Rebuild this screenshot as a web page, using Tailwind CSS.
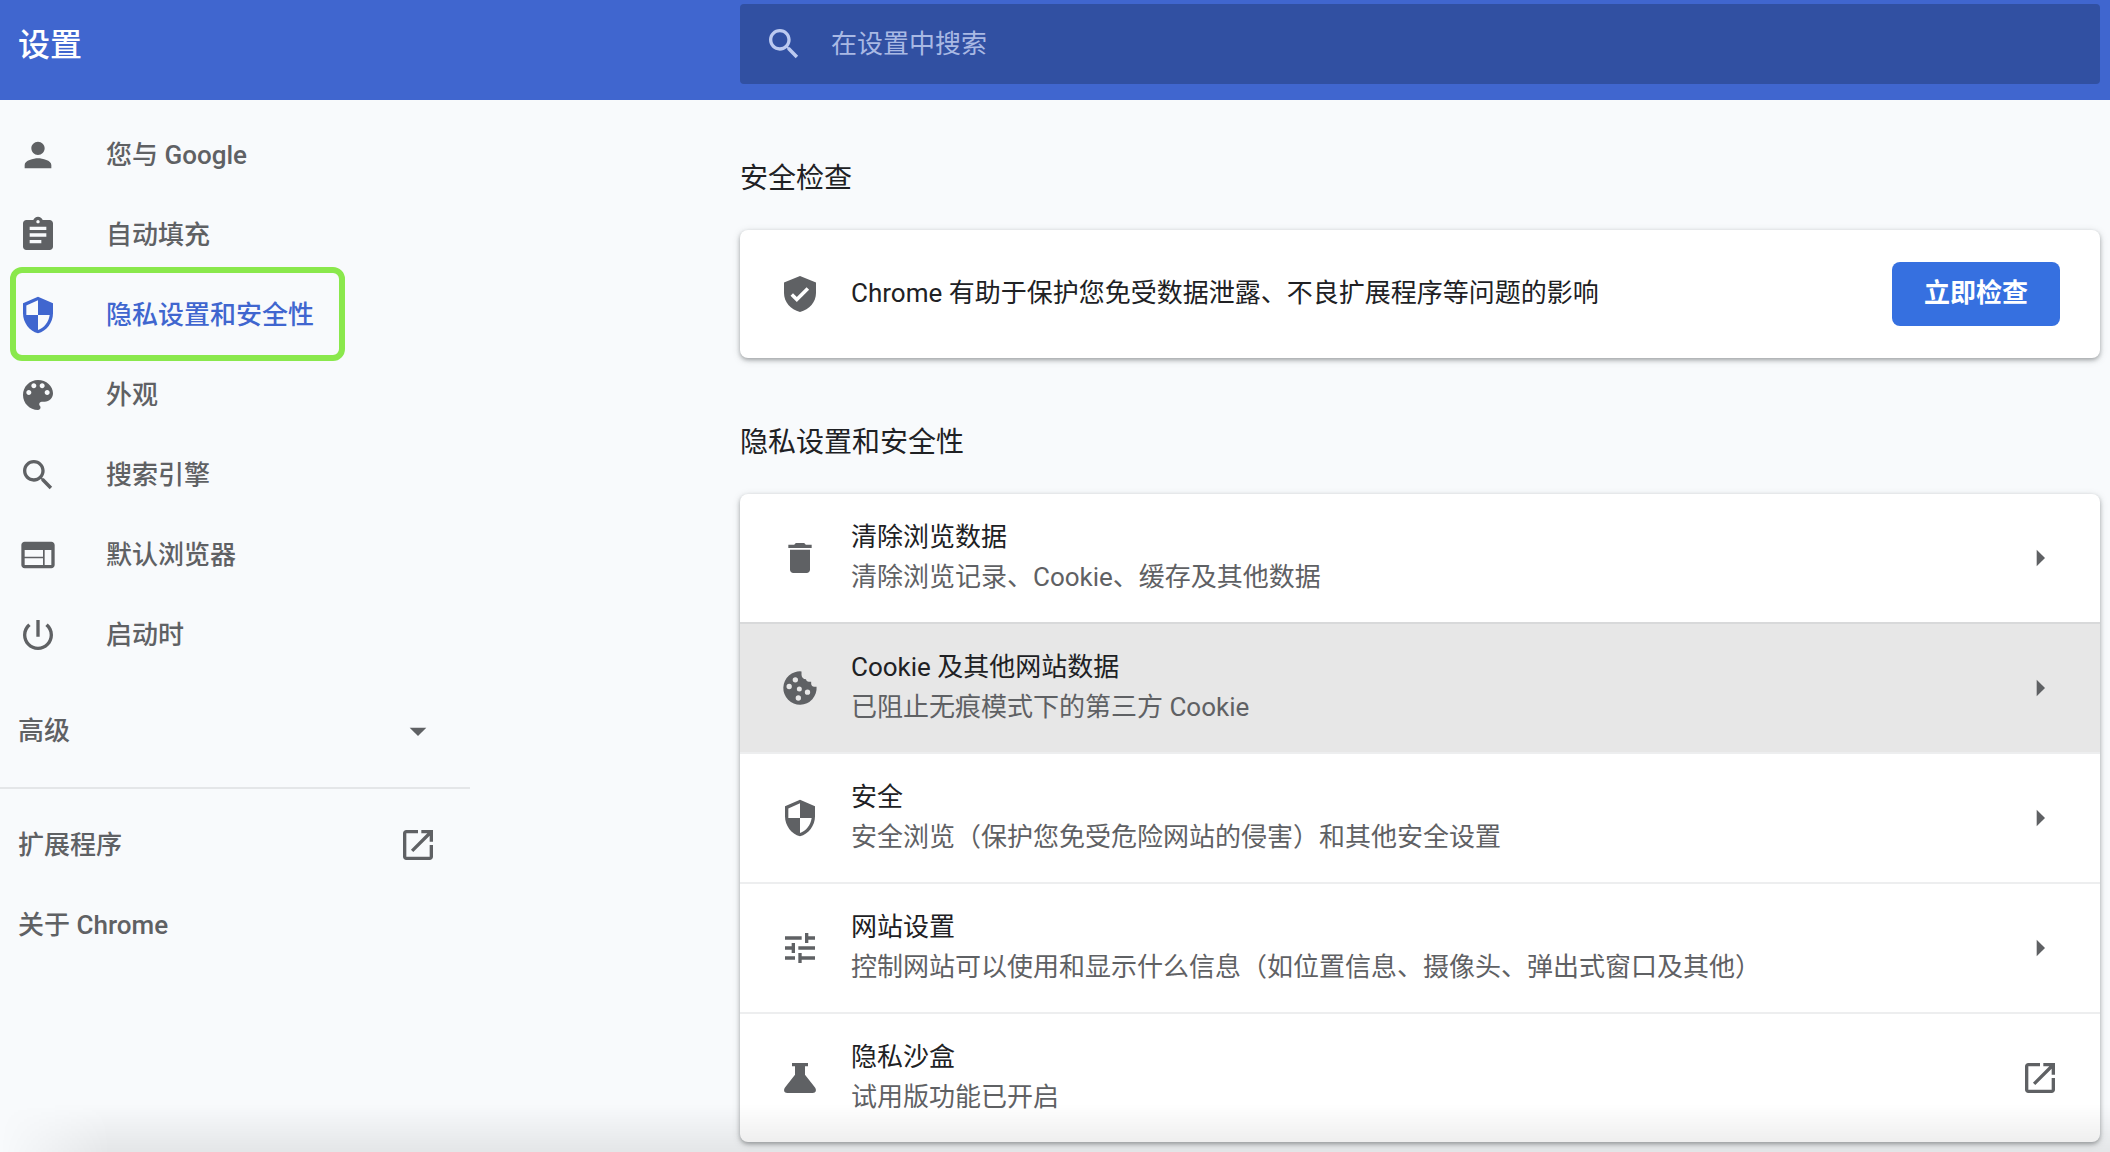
<!DOCTYPE html>
<html lang="zh-CN">
<head>
<meta charset="utf-8">
<title>设置</title>
<script src="https://cdn.jsdelivr.net/npm/@tailwindcss/browser@4"></script>
</head>
<body class="relative min-h-screen bg-[#f8fafc] font-[Roboto,'Noto_Sans_CJK_SC',sans-serif] text-[26px] leading-10 text-[#202124]">
<svg class="hidden" aria-hidden="true">
  <symbol id="search" viewBox="0 0 24 24"><path d="M15.5 14h-.79l-.28-.27C15.41 12.59 16 11.11 16 9.5 16 5.91 13.09 3 9.5 3S3 5.91 3 9.5 5.91 16 9.5 16c1.61 0 3.09-.59 4.23-1.57l.27.28v.79l5 4.99L20.49 19l-4.99-5zm-6 0C7.01 14 5 11.99 5 9.5S7.01 5 9.5 5 14 7.01 14 9.5 11.99 14 9.5 14z"/></symbol>
  <symbol id="person" viewBox="0 0 24 24"><path d="M12 12c2.21 0 4-1.79 4-4s-1.79-4-4-4-4 1.79-4 4 1.79 4 4 4zm0 2c-2.67 0-8 1.34-8 4v2h16v-2c0-2.66-5.33-4-8-4z"/></symbol>
  <symbol id="assignment" viewBox="0 0 24 24"><path d="M19 3h-4.18C14.4 1.84 13.3 1 12 1c-1.3 0-2.4.84-2.82 2H5c-1.1 0-2 .9-2 2v14c0 1.1.9 2 2 2h14c1.1 0 2-.9 2-2V5c0-1.1-.9-2-2-2zm-7 0c.55 0 1 .45 1 1s-.45 1-1 1-1-.45-1-1 .45-1 1-1zm2 14H7v-2h7v2zm3-4H7v-2h10v2zm0-4H7V7h10v2z"/></symbol>
  <symbol id="shield" viewBox="0 0 24 24"><path d="M12 1L3 5v6c0 5.55 3.84 10.74 9 12 5.16-1.26 9-6.45 9-12V5l-9-4zm0 10.99h7c-.53 4.12-3.28 7.79-7 8.94V12H5V6.3l7-3.11v8.8z"/></symbol>
  <symbol id="palette" viewBox="0 0 24 24"><path d="M12 3c-4.97 0-9 4.03-9 9s4.03 9 9 9c.83 0 1.5-.67 1.5-1.5 0-.39-.15-.74-.39-1.01-.23-.26-.38-.61-.38-.99 0-.83.67-1.5 1.5-1.5H16c2.76 0 5-2.24 5-5 0-4.42-4.03-8-9-8zm-5.5 9c-.83 0-1.5-.67-1.5-1.5S5.67 9 6.5 9 8 9.67 8 10.5 7.33 12 6.5 12zm3-4C8.67 8 8 7.33 8 6.5S8.67 5 9.5 5s1.5.67 1.5 1.5S10.33 8 9.5 8zm5 0c-.83 0-1.5-.67-1.5-1.5S13.67 5 14.5 5s1.5.67 1.5 1.5S15.33 8 14.5 8zm3 4c-.83 0-1.5-.67-1.5-1.5S16.67 9 17.5 9s1.5.67 1.5 1.5-.67 1.5-1.5 1.5z"/></symbol>
  <symbol id="web" viewBox="0 0 24 24"><path d="M20 4H4c-1.1 0-1.99.9-1.99 2L2 18c0 1.1.9 2 2 2h16c1.1 0 2-.9 2-2V6c0-1.1-.9-2-2-2zm-5 14H4v-4h11v4zm0-5H4V9h11v4zm5 5h-4V9h4v9z"/></symbol>
  <symbol id="power" viewBox="0 0 24 24"><path d="M13 3h-2v10h2V3zm4.83 2.17l-1.42 1.42C17.99 7.86 19 9.81 19 12c0 3.87-3.13 7-7 7s-7-3.13-7-7c0-2.19 1.01-4.14 2.58-5.42L6.17 5.17C4.23 6.82 3 9.26 3 12c0 4.97 4.03 9 9 9s9-4.03 9-9c0-2.74-1.23-5.18-3.17-6.83z"/></symbol>
  <symbol id="down" viewBox="0 0 24 24"><path d="M7 10l5 5 5-5z"/></symbol>
  <symbol id="right" viewBox="0 0 24 24"><path d="M10 17l5-5-5-5z"/></symbol>
  <symbol id="open" viewBox="0 0 24 24"><path d="M12 3v2H5v14h14v-7h2v7c0 1.1-.9 2-2 2H5c-1.11 0-2-.9-2-2V5c0-1.1.89-2 2-2h7zm2 0h7v7h-2V6.41l-9.83 9.83-1.41-1.41L17.59 5H14V3z"/></symbol>
  <symbol id="verified" viewBox="0 0 40 40"><path d="M20 2L4 8.500V19c0 9 6.500 16.500 16 19 9.500-2.500 16-10 16-19V8.500L20 2zm-3.200 26l-6.300-6.300 2.500-2.500 3.800 3.800L26.600 13.200l2.500 2.500L16.800 28z"/></symbol>
  <symbol id="trash" viewBox="0 0 24 24"><path d="M6 19c0 1.100.9 2 2 2h8c1.100 0 2-.9 2-2V7H6v12zM19 4h-3.500l-1-1h-5l-1 1H5v2h14V4z"/></symbol>
  <symbol id="cookie" viewBox="0 0 24 24"><path fill-rule="evenodd" d="M12.900 2.050A10 10 0 1 0 21.950 11.200H20.500C19.400 11.200 18.700 10.300 18.700 9.300V8.200H17.300C16.400 8.200 15.700 7.500 15.600 6.700 14.100 6.700 12.900 5.500 12.900 4zM9.200 5.500a1.600 1.600 0 1 1 0 3.200 1.600 1.600 0 0 1 0-3.200zM5.500 9.500a1.600 1.600 0 1 1 0 3.200 1.600 1.600 0 0 1 0-3.200zM11.600 11.100a1.500 1.500 0 1 1 0 3 1.500 1.500 0 0 1 0-3zM16.500 12.900a1.600 1.600 0 1 1 0 3.200 1.600 1.600 0 0 1 0-3.200zM11 16.400a1.600 1.600 0 1 1 0 3.200 1.600 1.600 0 0 1 0-3.200z"/></symbol>
  <symbol id="tune" viewBox="0 0 24 24"><path d="M3 17v2h6v-2H3zM3 5v2h10V5H3zm10 16v-2h8v-2h-8v-2h-2v6h2zM7 9v2H3v2h4v2h2V9H7zm14 4v-2H11v2h10zm-6-4h2V7h4V5h-4V3h-2v6z"/></symbol>
  <symbol id="flask" viewBox="0 0 24 24"><path d="M7.200 3h9.600v2H15v5l6 7.700c1.100 1.500.5 3.300-1.300 3.300H4.300C2.500 21 1.900 19.200 3 17.700L9 10V5H7.200z"/></symbol>
</svg>

<header class="flex h-[100px] items-start bg-[#4066cf]">
  <h1 class="w-[740px] shrink-0 pt-[25px] pl-[18px] text-[32px] font-medium text-white">设置</h1>
  <label class="mt-1 mr-2.5 flex h-20 flex-1 items-center rounded bg-[#3150a2] pl-6 text-[#bccaf0]">
    <svg class="size-10 fill-current"><use href="#search"/></svg>
    <input type="search" aria-label="在设置中搜索" placeholder="在设置中搜索" class="ml-[27px] h-20 min-w-0 flex-1 bg-transparent outline-none placeholder:text-[#a9b9e4]">
  </label>
</header>

<div class="flex items-start">
  <nav class="w-[470px] shrink-0 pt-[15px] font-medium text-[#5f6164]">
    <a href="#" class="flex h-20 items-center gap-12 pl-[18px]"><svg class="size-10 fill-current"><use href="#person"/></svg>您与 Google</a>
    <a href="#" class="flex h-20 items-center gap-12 pl-[18px]"><svg class="size-10 fill-current"><use href="#assignment"/></svg>自动填充</a>
    <a href="#" class="relative flex h-20 items-center gap-12 pl-[18px] text-[#4066cf]"><svg class="size-10 fill-current"><use href="#shield"/></svg>隐私设置和安全性
      <span class="absolute -top-2 left-2.5 h-[94px] w-[335px] rounded-xl border-6 border-[#8ae84c]"></span></a>
    <a href="#" class="flex h-20 items-center gap-12 pl-[18px]"><svg class="size-10 fill-current"><use href="#palette"/></svg>外观</a>
    <a href="#" class="flex h-20 items-center gap-12 pl-[18px]"><svg class="size-10 fill-current"><use href="#search"/></svg>搜索引擎</a>
    <a href="#" class="flex h-20 items-center gap-12 pl-[18px]"><svg class="size-10 fill-current"><use href="#web"/></svg>默认浏览器</a>
    <a href="#" class="flex h-20 items-center gap-12 pl-[18px]"><svg class="size-10 fill-current"><use href="#power"/></svg>启动时</a>
    <button type="button" class="mt-4 flex h-20 w-full items-center justify-between pr-8 pl-[18px]">高级<svg class="size-10 fill-current"><use href="#down"/></svg></button>
    <hr class="mt-4 mb-4 border-t-2 border-[#e4e6e8]">
    <a href="#" class="flex h-20 items-center justify-between pr-8 pl-[18px]">扩展程序<svg class="size-10 fill-current"><use href="#open"/></svg></a>
    <a href="#" class="flex h-20 items-center pl-[18px]">关于 Chrome</a>
  </nav>

  <main class="mr-2.5 mb-2.5 ml-[270px] min-w-0 flex-1">
    <h2 class="pt-[59px] pb-[31px] text-[28px]">安全检查</h2>
    <section class="flex h-32 items-center rounded-lg bg-white pr-10 pl-10 shadow-[0_2px_4px_rgba(60,64,67,.4),0_2px_8px_rgba(60,64,67,.15)]">
      <svg class="size-10 fill-[#5f6164]"><use href="#verified"/></svg>
      <p class="ml-[31px] flex-1 pb-0.5">Chrome 有助于保护您免受数据泄露、不良扩展程序等问题的影响</p>
      <button type="button" class="h-16 rounded-lg bg-[#3670e0] px-8 pb-0.5 font-bold text-white">立即检查</button>
    </section>

    <h2 class="pt-[65px] pb-[31px] text-[28px]">隐私设置和安全性</h2>
    <section class="divide-y-2 divide-[#edeeef] overflow-hidden rounded-lg bg-white shadow-[0_2px_4px_rgba(60,64,67,.4),0_2px_8px_rgba(60,64,67,.15)]">
      <a href="#" class="box-content flex h-32 items-center border-[#d8d9da]! px-10"><svg class="size-10 fill-[#5f6164]"><use href="#trash"/></svg>
        <span class="ml-[31px] flex-1 pb-0.5"><span class="block">清除浏览数据</span><span class="block text-[#5f6164]">清除浏览记录、Cookie、缓存及其他数据</span></span>
        <svg class="size-10 fill-[#5f6164]"><use href="#right"/></svg></a>
      <a href="#" class="box-content flex h-32 items-center bg-[#e7e7e7] bg-clip-padding px-10"><svg class="size-10 fill-[#5f6164]"><use href="#cookie"/></svg>
        <span class="ml-[31px] flex-1 pb-0.5"><span class="block">Cookie 及其他网站数据</span><span class="block text-[#5f6164]">已阻止无痕模式下的第三方 Cookie</span></span>
        <svg class="size-10 fill-[#5f6164]"><use href="#right"/></svg></a>
      <a href="#" class="box-content flex h-32 items-center px-10"><svg class="size-10 fill-[#5f6164]"><use href="#shield"/></svg>
        <span class="ml-[31px] flex-1 pb-0.5"><span class="block">安全</span><span class="block text-[#5f6164]">安全浏览（保护您免受危险网站的侵害）和其他安全设置</span></span>
        <svg class="size-10 fill-[#5f6164]"><use href="#right"/></svg></a>
      <a href="#" class="box-content flex h-32 items-center px-10"><svg class="size-10 fill-[#5f6164]"><use href="#tune"/></svg>
        <span class="ml-[31px] flex-1 pb-0.5"><span class="block">网站设置</span><span class="block text-[#5f6164]">控制网站可以使用和显示什么信息（如位置信息、摄像头、弹出式窗口及其他）</span></span>
        <svg class="size-10 fill-[#5f6164]"><use href="#right"/></svg></a>
      <a href="#" class="box-content flex h-32 items-center px-10"><svg class="size-10 fill-[#5f6164]"><use href="#flask"/></svg>
        <span class="ml-[31px] flex-1 pb-0.5"><span class="block">隐私沙盒</span><span class="block text-[#5f6164]">试用版功能已开启</span></span>
        <svg class="size-10 fill-[#5f6164]"><use href="#open"/></svg></a>
    </section>
  </main>
</div>
<!-- soft shade along the window's lower edge -->
<div class="pointer-events-none absolute inset-x-0 bottom-0 h-12 bg-linear-to-t from-black/8 to-transparent mask-l-from-[calc(100%-110px)] mask-l-to-100%"></div>
</body>
</html>
